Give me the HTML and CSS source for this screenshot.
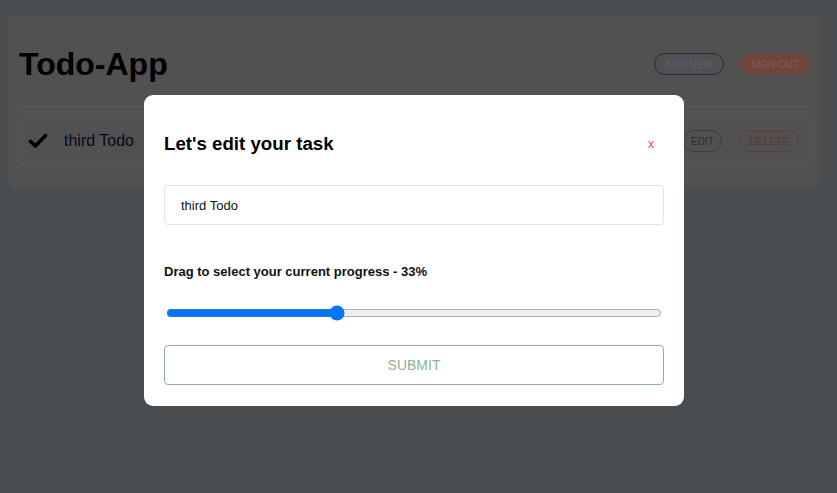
FILE: index.html
```html
<!DOCTYPE html>
<html>
<head>
<meta charset="utf-8">
<link rel="stylesheet" href="styles.css">
</head>
<body>
<div class="page">
  <div class="card">
    <div class="header">
      <h1 class="title">Todo-App</h1>
      <div class="actions">
        <button class="pill pill-add">ADD NEW</button>
        <button class="pill pill-signout">SIGN OUT</button>
      </div>
    </div>
    <div class="todo">
      <svg class="check" width="20" height="16" viewBox="0 0 20 16"><polyline points="2.5,8.5 7.5,13 17.5,2.5" fill="none" stroke="#000" stroke-width="3.6" stroke-linecap="round" stroke-linejoin="round"/></svg>
      <span class="todo-text">third Todo</span>
      <div class="todo-actions">
        <button class="pill pill-edit">EDIT</button>
        <button class="pill pill-delete">DELETE</button>
      </div>
    </div>
  </div>
</div>
<div class="backdrop"></div>
<div class="modal">
  <div class="modal-head">
    <h2 class="modal-title">Let's edit your task</h2>
    <span class="close">x</span>
  </div>
  <input class="text-input" type="text" value="third Todo">
  <div class="label">Drag to select your current progress - 33%</div>
  <input class="range" type="range" min="0" max="100" value="34">
  <button class="submit">SUBMIT</button>
</div>
</body>
</html>
```

FILE: styles.css
```css
* { box-sizing: border-box; }
html, body { margin: 0; height: 100%; }
body {
  background: #949aa0;
  font-family: "Liberation Sans", Arial, sans-serif;
}
.page { padding: 15px 17px 0 8px; }
.card {
  background: #a2a2a2;
  border-radius: 8px;
  padding: 10px 10px 21px 10px;
}
.header {
  display: flex;
  align-items: center;
  justify-content: space-between;
  padding: 20px 0 23px 1px;
  border-bottom: 1px solid #b2b2b2;
}
.title {
  margin: 0;
  font-size: 32px;
  line-height: 38px;
  font-weight: bold;
  color: #000;
}
.actions, .todo-actions { display: flex; gap: 16px; }
.pill {
  height: 22px;
  border-radius: 11px;
  font-family: "Liberation Sans", Arial, sans-serif;
  font-size: 10px;
  padding: 0;
  background: transparent;
  cursor: pointer;
}
.pill-add { width: 70px; border: 1px solid #4a5072; color: #b4bcf4; }
.pill-signout { width: 70px; border: 1px solid #e08a78; background: #e08a78; color: #ffb8aa; }
.todo {
  margin-top: 9px;
  height: 50px;
  border: 1px solid #b0b0b0;
  border-radius: 8px;
  display: flex;
  align-items: center;
  padding: 0 10px 0 9px;
}
.check { margin-right: 16px; }
.todo-text { font-size: 16px; color: #101030; flex: 1; }
.todo-actions { gap: 17px; }
.pill-edit { width: 39px; border: 1px solid #6a806c; color: #4a5c50; }
.pill-delete { width: 60px; border: 1px solid #c07a6c; color: #b86a5c; }

.backdrop {
  position: fixed;
  inset: 0;
  background: rgba(0, 0, 0, 0.5);
}
.modal {
  position: fixed;
  left: 144px;
  top: 95px;
  width: 540px;
  height: 311px;
  background: #fff;
  border-radius: 9px;
  padding: 20px 20px 21px 20px;
  display: flex;
  flex-direction: column;
}
.modal-head {
  display: flex;
  align-items: center;
  justify-content: space-between;
  margin-top: 18px;
  height: 22px;
}
.modal-title {
  margin: 0;
  font-size: 18.7px;
  line-height: 22px;
  font-weight: bold;
  color: #000;
}
.close {
  color: #ff4040;
  font-size: 12px;
  margin-right: 10px;
}
.text-input {
  margin-top: 30px;
  height: 40px;
  width: 100%;
  border: 1px solid #e2e2e2;
  border-radius: 4px;
  padding: 0 16px;
  font-family: "Liberation Sans", Arial, sans-serif;
  font-size: 13px;
  color: #111;
  outline: none;
}
.label {
  margin-top: 39px;
  font-size: 13px;
  line-height: 15px;
  font-weight: bold;
  color: #111;
}
.range {
  display: block;
  margin: 26px 2px 0 2px;
  width: calc(100% - 4px);
  height: 16px;
}
.submit {
  margin-top: 24px;
  height: 40px;
  width: 100%;
  background: #fff;
  border: 1px solid #8fb48f;
  border-radius: 4px;
  color: #8fb48f;
  font-family: "Liberation Sans", Arial, sans-serif;
  font-size: 14px;
}
```
